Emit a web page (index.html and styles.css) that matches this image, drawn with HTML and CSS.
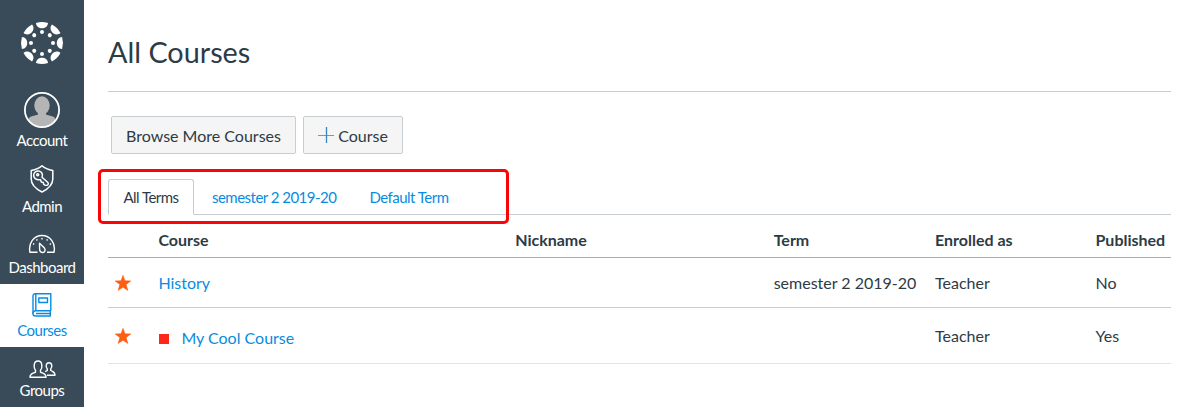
FILE: index.html
```html
<!DOCTYPE html>
<html lang="en">
<head>
<meta charset="utf-8">
<title>All Courses</title>
<link rel="stylesheet" href="styles.css">
</head>
<body>
<div class="app">
  <nav class="sidebar">
    <a class="logo"><svg width="44" height="44" viewBox="-22 -22 44 44" fill="#fff">
      <defs><g id="petal"><path d="M-6 -20.100A21 21 0 0 1 6 -20.100C5.600 -13 -5.600 -13 -6 -20.100Z"/><circle cy="-11" r="2"/></g></defs>
      <use href="#petal"/><use href="#petal" transform="rotate(45)"/><use href="#petal" transform="rotate(90)"/><use href="#petal" transform="rotate(135)"/><use href="#petal" transform="rotate(180)"/><use href="#petal" transform="rotate(225)"/><use href="#petal" transform="rotate(270)"/><use href="#petal" transform="rotate(315)"/>
    </svg></a>
    <a class="item account"><svg width="36" height="36" viewBox="0 0 36 36">
      <defs><clipPath id="disc"><circle cx="18" cy="18" r="17"/></clipPath></defs>
      <g clip-path="url(#disc)" fill="#b5b5b5"><ellipse cx="18" cy="13.500" rx="7.700" ry="9.300"/><path d="M14 20h8v2.500c3 1.500 8 1 9.500 4.500v9H4.500v-9c1.500-3.500 6.500-3 9.500-4.500z"/></g>
      <circle cx="18" cy="18" r="17.100" fill="none" stroke="#fff" stroke-width="1.800"/>
    </svg><span>Account</span></a>
    <a class="item admin"><svg width="26" height="30" viewBox="0 0 26 30" fill="none" stroke="#fff" stroke-width="1.500" stroke-linejoin="round">
      <path d="M13 1.700C10.500 4 6 5.800 2.200 6.500V15c0 5.500 4.800 10 10.800 13C19 25 23.800 20.500 23.800 15V6.500C20 5.800 15.500 4 13 1.700z"/>
      <path d="M13 13.300A4.400 4.400 0 1 0 9.300 15.700L11.500 15.700L12.300 18L14.300 18.500L14.700 20.300C15.500 21.300 17.500 21.700 18.800 20.800C19.700 19.800 19.300 18.800 18.600 18.200Z"/><circle cx="8.700" cy="10.800" r="1"/>
    </svg><span>Admin</span></a>
    <a class="item dashboard"><svg width="28" height="20" viewBox="0 0 28 20" fill="none" stroke="#fff" stroke-width="1.400" stroke-linejoin="round">
      <path d="M9.500 18.300H2C0 9 6 1.500 14 1.500S28 9 26 18.300H19"/>
      <path d="M5 9.700l1.300.7M8.500 5.300l.8 1.200M14 4v1.600M19.500 5.300l-.8 1.200M23 9.700l-1.300.7"/>
      <path d="M11.500 9.200L16.200 13.700C18 16 16.800 18.500 14.700 18.500C12.300 18.500 11.600 16.800 11.600 14.500Z"/>
    </svg><span>Dashboard</span></a>
    <a class="item courses active"><svg width="20" height="24" viewBox="0 0 20 24" fill="none" stroke="#088ce0" stroke-width="1.400" stroke-linejoin="round">
      <path d="M18.800 17.800H3.500C.1 17.800 .1 23 3.500 23H18.300V17.800M4 20.500H18.300"/>
      <path d="M1 20.500V3C1 1.500 2 .7 3.500 .7H18.800V17.800M3.800 1v17M6.800 5h8.700v4.500H6.800z"/>
    </svg><span>Courses</span></a>
    <a class="item groups"><svg width="27" height="19" viewBox="0 0 27 19" fill="none" stroke="#fff" stroke-width="1.400" stroke-linejoin="round">
      <path d="M6.500 10.300C4.500 8 4.200 1 9 1s4.500 7 2.500 9.300v1.900c2 1.200 5.500 1 5.500 5.100H1c0-4.100 3.500-3.900 5.500-5.100z"/>
      <path d="M16.200 11.700l2.100-1.200V9C16.500 7 16.700 2.800 20 2.800S23.500 7 21.700 9v1.500c2 1.200 4.300 1.200 4.300 4.800h-8"/>
    </svg><span>Groups</span></a>
  </nav>
  <main class="content">
    <h1 class="title">All Courses</h1>
    <div class="actions">
      <button class="btn browse">Browse More Courses</button>
      <button class="btn add"><svg width="16" height="16" viewBox="0 0 16 16"><path d="M0 8.500h16" stroke="#8b929a"/><path d="M8.500 0v16" stroke="#3c83c0" stroke-width="1.300"/></svg><span>Course</span></button>
    </div>
    <div class="tabs">
      <a class="tab selected">All Terms</a><a class="tab semester">semester 2 2019-20</a><a class="tab">Default Term</a>
      <div class="highlight"></div>
    </div>
    <div class="row head"><b></b><b>Course</b><b>Nickname</b><b>Term</b><b>Enrolled as</b><b>Published</b></div>
    <div class="row history">
      <span class="star"><svg width="16" height="16" viewBox="0 0 16 16"><path fill="#fc5e13" stroke="#fc5e13" stroke-width=".5" d="M8 .3l2 5.400 5.900.2-4.700 3.600 1.700 6L8 12.300l-4.900 3.200 1.700-6L.1 5.900l5.900-.2z"/></svg></span>
      <a class="link">History</a><span></span><span>semester 2 2019-20</span><span>Teacher</span><span>No</span>
    </div>
    <div class="row cool">
      <span class="star"><svg width="16" height="16" viewBox="0 0 16 16"><path fill="#fc5e13" stroke="#fc5e13" stroke-width=".5" d="M8 .3l2 5.400 5.900.2-4.700 3.600 1.700 6L8 12.300l-4.900 3.200 1.700-6L.1 5.900l5.900-.2z"/></svg></span>
      <a class="link named"><i class="swatch"></i>My Cool Course</a><span></span><span></span><span>Teacher</span><span>Yes</span>
    </div>
  </main>
</div>
</body>
</html>
```
FILE: styles.css
```css
* { box-sizing: border-box; }
body { margin: 0; background: #fff; color: #2d3b45; font: 16px/24px Lato, sans-serif; overflow: hidden; }
svg { display: block; flex: none; }
.app { display: flex; height: 407px; }
.sidebar { width: 84px; flex: none; background: #394b58; display: flex; flex-direction: column; }
.logo { height: 85px; display: flex; justify-content: center; padding-top: 21px; }
.item { display: flex; flex-direction: column; align-items: center; justify-content: space-between; color: #fff; font-size: 15px; letter-spacing: -0.5px; line-height: 18px; }
.account { height: 73px; padding: 7px 0 9px; }
.admin { height: 65px; padding: 6px 0 8px; }
.dashboard { height: 61px; padding: 11px 0 8px; }
.courses { height: 63px; padding: 9px 0 8px; }
.groups { height: 60px; padding: 13px 0 8px; }
.active { background: #fff; color: #088ce0; }
.content { width: 1063px; margin-left: 24px; flex: none; }
.title { margin: 0; height: 92px; padding-top: 33px; border-bottom: 1px solid #c7cdd1; font-size: 28.8px; line-height: 38px; font-weight: 400; }
.actions { display: flex; gap: 7px; padding: 24px 3px 0; height: 87px; }
.btn { height: 38px; padding: 2px 0 0; border: 1px solid #c7cdd1; border-radius: 2px; background: #f5f5f5; color: #2d3b45; font: 16px/24px Lato, sans-serif; display: flex; align-items: center; justify-content: center; }
.browse { width: 185px; }
.add { width: 100px; gap: 4px; }
.add svg { margin-top: -2px; }
.tabs { position: relative; display: flex; height: 36px; border-bottom: 1px solid #c7cdd1; font-size: 15px; letter-spacing: -0.52px; line-height: 37px; color: #088ce0; }
.tab { height: 36px; }
.selected { width: 86px; text-align: center; line-height: 35px; border: 1px solid #c7cdd1; border-bottom-color: #fff; border-radius: 3px 3px 0 0; background: #fff; color: #2d3b45; }
.semester { width: 175.5px; padding-left: 18px; }
.highlight { position: absolute; left: -10px; top: -10px; width: 411px; height: 55px; border: 3px solid #f80508; border-radius: 5px; }
.row { display: grid; grid-template-columns: 50.4px 356.8px 258.500px 161.300px 160.500px 1fr; align-items: center; white-space: nowrap; border-bottom: 1px solid #c7cdd1; }
.head { height: 43px; padding-top: 8px; border-color: #a5afb5; }
.history { height: 50px; padding-top: 1px; }
.cool { height: 56px; padding-top: 0; border-color: #e1e4e6; }
.star { padding-left: 7px; }
.link { color: #088ce0; }
.named { display: flex; align-items: center; padding-top: 4px; }
.swatch { width: 10px; height: 10px; margin: 2px 12px 0 1px; background: #ff2717; }
```
